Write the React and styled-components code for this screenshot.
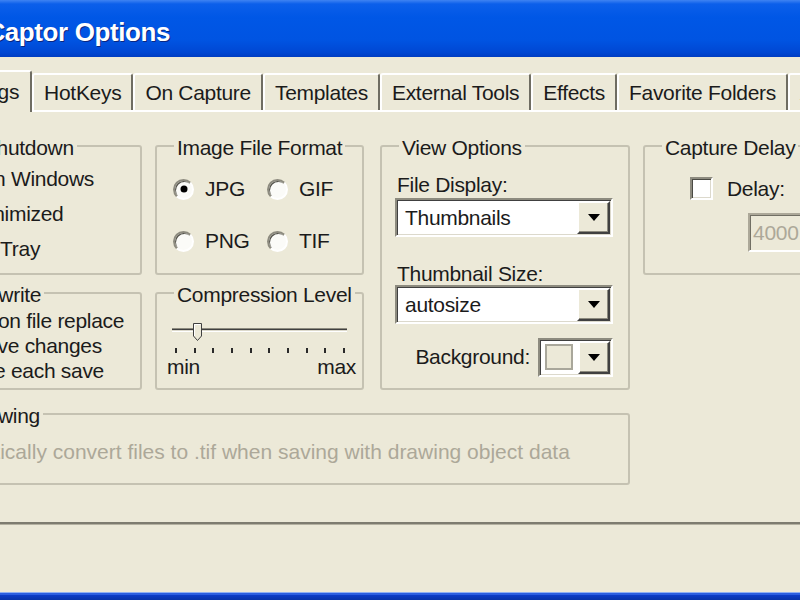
import React from "react";
import styled, { createGlobalStyle } from "styled-components";

const GlobalStyle = createGlobalStyle`
  html, body {
    margin: 0;
    padding: 0;
    background: #ece9d8;
    overflow: hidden;
  }
  body {
    font-family: "Liberation Sans", Arial, sans-serif;
    font-size: 21px;
    letter-spacing: -0.3px;
    color: #1b1b1b;
  }
`;

const Viewport = styled.div`
  width: 800px;
  height: 600px;
  overflow: hidden;
`;

/* the dialog is wider than the shot: it sits partly off the left and right edge */
const Window = styled.div`
  width: 1240px;
  height: 600px;
  margin-left: -190px;
  display: flex;
  flex-direction: column;
  background: #ece9d8;
`;

const TitleBar = styled.div`
  height: 57px;
  flex-shrink: 0;
  box-sizing: border-box;
  padding: 17px 0 0 6px;
  display: flex;
  align-items: flex-start;
  gap: 4px;
  background: linear-gradient(
    #3f83f2 0%,
    #0c5fea 7%,
    #0057e6 30%,
    #0054e2 70%,
    #0047d3 92%,
    #003dc2 100%
  );
`;

const TitleIcon = styled.svg`
  width: 22px;
  height: 22px;
  margin-top: 4px;
  flex-shrink: 0;
`;

const TitleText = styled.div`
  font-size: 26px;
  font-weight: bold;
  line-height: 30px;
  letter-spacing: -0.4px;
  color: #fff;
  white-space: nowrap;
  text-shadow: 1px 1px 0 #0a2680;
`;

const Body = styled.div`
  flex: 1;
  display: flex;
  flex-direction: column;
  padding: 13px 0 0 26px;
`;

const TabStrip = styled.div`
  display: flex;
  align-items: flex-end;
  height: 40px;
`;

const Tab = styled.div`
  box-sizing: border-box;
  height: ${(p) => (p.$active ? "42px" : "37px")};
  margin-bottom: ${(p) => (p.$active ? "-2px" : "0")};
  padding: 0 ${(p) => (p.$active ? "11px" : "10px")};
  display: flex;
  align-items: center;
  white-space: nowrap;
  background: #ece9d8;
  border-top: 2px solid #fff;
  border-left: 2px solid #fff;
  border-right: 2px solid #6f6d62;
  border-radius: 3px 3px 0 0;
  position: relative;
  z-index: ${(p) => (p.$active ? 1 : 0)};
`;

const Panel = styled.div`
  border-top: 2px solid #fff;
  border-left: 2px solid #fff;
  border-right: 2px solid #7e7c70;
  border-bottom: 2px solid #7e7c70;
  box-shadow: 0 1px 0 #b4b1a1;
  padding: 33px 0 37px 12px;
`;

const Grid = styled.div`
  display: grid;
  grid-template-columns: 292px 13px 209px 16px 250px 13px 220px;
  grid-template-rows: 130px 17px 98px 23px 72px;
`;

const Group = styled.div`
  position: relative;
  grid-column: ${(p) => p.$col};
  grid-row: ${(p) => p.$row};
  border: 2px solid #c5c2b2;
  border-radius: 3px;
  padding: ${(p) => p.$pad || "0"};
`;

const Legend = styled.div`
  position: absolute;
  top: -10px;
  left: 17px;
  padding: 0 3px;
  line-height: 22px;
  background: #ece9d8;
  white-space: nowrap;
`;

const CheckRow = styled.div`
  display: flex;
  align-items: center;
  gap: ${(p) => p.$gap || 12}px;
  height: ${(p) => p.$h}px;
  white-space: nowrap;
  color: ${(p) => (p.$disabled ? "#aca899" : "inherit")};
  letter-spacing: ${(p) => (p.$disabled ? "0" : "inherit")};
`;

const CheckBox = styled.span`
  width: 23px;
  height: 23px;
  box-sizing: border-box;
  flex-shrink: 0;
  display: flex;
  align-items: center;
  justify-content: center;
  background: ${(p) => (p.$disabled ? "#ece9d8" : "#fff")};
  border: 2px solid;
  border-color: #8d8b7f #fff #fff #8d8b7f;
  box-shadow: inset 1px 1px 0 #4a4a44, inset -1px -1px 0 #dcd9cc;
`;

const RadioGrid = styled.div`
  display: grid;
  grid-template-columns: 94px 94px;
  grid-auto-rows: 30px;
  row-gap: 22px;
`;

const RadioItem = styled.div`
  display: flex;
  align-items: center;
  gap: 11px;
`;

const Radio = styled.span`
  width: 21px;
  height: 21px;
  box-sizing: border-box;
  flex-shrink: 0;
  border-radius: 50%;
  position: relative;
  background: #fbfbf8;
  border: 2px solid;
  border-color: #8d8b7f #fff #fff #8d8b7f;
  box-shadow: inset 1px 1px 0 #55544c;

  &::after {
    content: "";
    display: ${(p) => (p.$checked ? "block" : "none")};
    position: absolute;
    left: 50%;
    top: 50%;
    width: 7px;
    height: 7px;
    border-radius: 50%;
    background: #000;
    transform: translate(-50%, -50%);
  }
`;

const Track = styled.div`
  position: relative;
  height: 4px;
  margin: 8px 9px 16px 5px;
  background: linear-gradient(#8d8b7f 0 1px, #404040 1px 2px, #dcd9cc 2px 3px, #fff 3px);
`;

const Thumb = styled.svg`
  position: absolute;
  left: 21px;
  top: -5px;
  width: 9px;
  height: 18px;
`;

const Ticks = styled.div`
  display: flex;
  justify-content: space-between;
  height: 5px;
  margin: 0 11px 0 8px;
`;

const Tick = styled.span`
  width: 2px;
  height: 5px;
  background: #2a2a2a;
`;

const ScaleLabels = styled.div`
  display: flex;
  justify-content: space-between;
  line-height: 22px;
  margin-top: 3px;
`;

const FieldLabel = styled.div`
  line-height: 22px;
  margin: ${(p) => p.$top || 0}px 0 0 2px;
  white-space: nowrap;
`;

const Combo = styled.div`
  display: flex;
  box-sizing: border-box;
  height: 39px;
  width: ${(p) => p.$w || "100%"};
  margin-top: ${(p) => p.$top || 0}px;
  background: #fff;
  border: 2px solid;
  border-color: #8d8b7f #fff #fff #8d8b7f;
  box-shadow: inset 1px 1px 0 #404040, inset -1px -1px 0 #dcd9cc;
`;

const ComboText = styled.span`
  flex: 1;
  display: flex;
  align-items: center;
  padding-left: 8px;
  white-space: nowrap;
`;

const Swatch = styled.span`
  width: 28px;
  height: 26px;
  box-sizing: border-box;
  margin: auto 5px auto 5px;
  border: 2px solid #a9a79b;
  background: #ece9d8;
`;

const DropButton = styled.span`
  width: 33px;
  box-sizing: border-box;
  margin: 1px 1px 1px 0;
  display: flex;
  align-items: center;
  justify-content: center;
  background: #ece9d8;
  border: 2px solid;
  border-color: #fff #404040 #404040 #fff;
  box-shadow: inset -1px -1px 0 #8d8b7f;
`;

const BackgroundRow = styled.div`
  display: flex;
  justify-content: flex-end;
  align-items: center;
  gap: 8px;
  height: 40px;
  margin-top: 13px;
`;

const TextField = styled.div`
  box-sizing: border-box;
  width: 120px;
  height: 39px;
  margin: 13px 0 0 58px;
  padding-left: 3px;
  display: flex;
  align-items: center;
  color: #aca899;
  background: #ece9d8;
  border: 2px solid;
  border-color: #aca899 #fff #fff #aca899;
  box-shadow: inset 1px 1px 0 #716f64;
`;

const Footer = styled.div`
  flex: 1;
`;

const BottomFrame = styled.div`
  height: 8px;
  flex-shrink: 0;
  background: linear-gradient(#8fb0f2 0 1px, #2a5ee0 1px 3px, #0a3cc8 3px, #0733a8 100%);
`;

const Arrow = () => (
  <svg width="12" height="7" viewBox="0 0 12 7">
    <polygon points="0,0 12,0 6,7" fill="#000" />
  </svg>
);

const Check = ({ checked, disabled, children, h, gap }) => (
  <CheckRow $h={h} $gap={gap} $disabled={disabled}>
    <CheckBox $disabled={disabled}>
      {checked && (
        <svg width="13" height="11" viewBox="0 0 13 11">
          <polyline points="1,5 5,9 12,1" fill="none" stroke="#000" strokeWidth="2.4" />
        </svg>
      )}
    </CheckBox>
    {children}
  </CheckRow>
);

const tabs = [
  "General",
  "Settings",
  "HotKeys",
  "On Capture",
  "Templates",
  "External Tools",
  "Effects",
  "Favorite Folders",
  "Advanced",
];

export default function App() {
  return (
    <Viewport>
      <GlobalStyle />
      <Window>
        <TitleBar>
          <TitleIcon viewBox="0 0 22 22">
            <rect x="2" y="6" width="18" height="13" rx="2" fill="#e8e8e8" stroke="#333" />
            <circle cx="11" cy="12.5" r="4" fill="#3a6ad8" stroke="#222" />
            <rect x="7" y="3" width="8" height="4" fill="#bbb" stroke="#333" />
          </TitleIcon>
          <TitleText>Screenshot Captor Options</TitleText>
        </TitleBar>

        <Body>
          <TabStrip>
            {tabs.map((t) => (
              <Tab key={t} $active={t === "Settings"}>
                {t}
              </Tab>
            ))}
          </TabStrip>

          <Panel>
            <Grid>
              <Group $col="1" $row="1" $pad="14px 0 0 12px">
                <Legend>Startup and Shutdown</Legend>
                <Check h={35} checked>Auto-run on Windows</Check>
                <Check h={35}>Launch minimized</Check>
                <Check h={35} checked>Shrink into Tray</Check>
              </Group>

              <Group $col="1" $row="3" $pad="14px 0 0 12px">
                <Legend>Warn on Overwrite</Legend>
                <Check h={25} checked>Warn user on file replace</Check>
                <Check h={25}>Confirm save changes</Check>
                <Check h={25}>Lock before each save</Check>
              </Group>

              <Group $col="3" $row="1" $pad="27px 0 0 16px">
                <Legend>Image File Format</Legend>
                <RadioGrid>
                  <RadioItem>
                    <Radio $checked />
                    JPG
                  </RadioItem>
                  <RadioItem>
                    <Radio />
                    GIF
                  </RadioItem>
                  <RadioItem>
                    <Radio />
                    PNG
                  </RadioItem>
                  <RadioItem>
                    <Radio />
                    TIF
                  </RadioItem>
                </RadioGrid>
              </Group>

              <Group $col="3" $row="3" $pad="26px 6px 0 10px">
                <Legend>Compression Level</Legend>
                <Track>
                  <Thumb viewBox="0 0 9 18">
                    <polygon points="0.5,0.5 8.5,0.5 8.5,13 4.5,17.5 0.5,13" fill="#ece9d8" stroke="#404040" />
                    <polyline points="1.5,13 1.5,1.5 7.5,1.5" fill="none" stroke="#fff" />
                  </Thumb>
                </Track>
                <Ticks>
                  {Array.from({ length: 10 }, (_, i) => (
                    <Tick key={i} />
                  ))}
                </Ticks>
                <ScaleLabels>
                  <span>min</span>
                  <span>max</span>
                </ScaleLabels>
              </Group>

              <Group $col="5" $row="1 / 4" $pad="27px 15px 0 13px">
                <Legend>View Options</Legend>
                <FieldLabel>File Display:</FieldLabel>
                <Combo $top={2}>
                  <ComboText>Thumbnails</ComboText>
                  <DropButton>
                    <Arrow />
                  </DropButton>
                </Combo>
                <FieldLabel $top={26}>Thumbnail Size:</FieldLabel>
                <Combo>
                  <ComboText>autosize</ComboText>
                  <DropButton>
                    <Arrow />
                  </DropButton>
                </Combo>
                <BackgroundRow>
                  <span>Background:</span>
                  <Combo $w="75px">
                    <Swatch />
                    <DropButton>
                      <Arrow />
                    </DropButton>
                  </Combo>
                </BackgroundRow>
              </Group>

              <Group $col="7" $row="1" $pad="30px 0 0 45px">
                <Legend>Capture Delay</Legend>
                <Check h={23} gap={14}>Delay:</Check>
                <TextField>4000</TextField>
              </Group>

              <Group $col="1 / 6" $row="5" $pad="22px 0 0 35px">
                <Legend>Freehand Drawing</Legend>
                <Check h={30} disabled>
                  Automatically convert files to .tif when saving with drawing object data
                </Check>
              </Group>
            </Grid>
          </Panel>
          <Footer />
        </Body>
        <BottomFrame />
      </Window>
    </Viewport>
  );
}
